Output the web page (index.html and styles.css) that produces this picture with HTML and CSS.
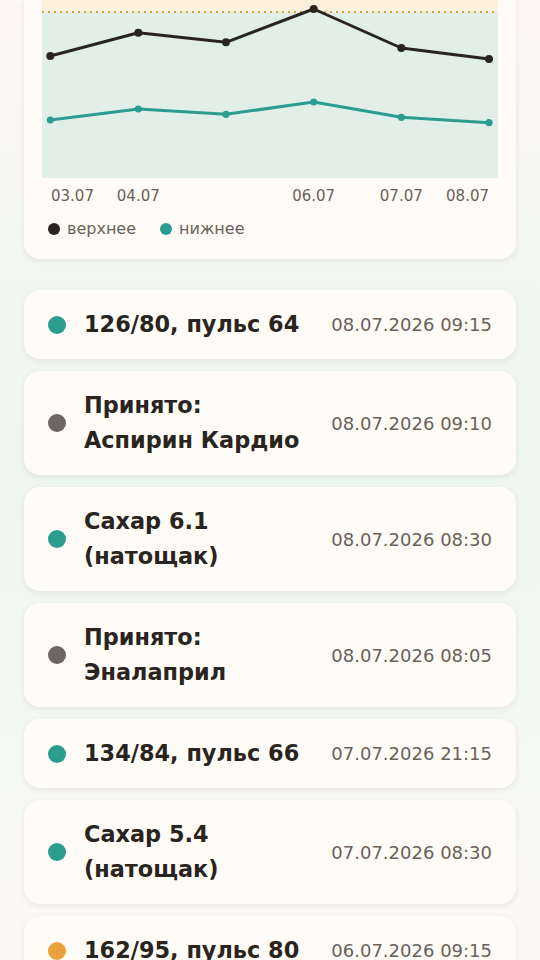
FILE: index.html
```html
<!DOCTYPE html>
<html lang="ru">
<head>
  <meta charset="UTF-8">
  <meta name="viewport" content="width=device-width, initial-scale=1.0">
  <title>Дневник здоровья</title>
  <link rel="stylesheet" href="styles.css">
</head>
<body>
  <div class="page">

    <!-- Pressure chart (scrolled past its header) -->
    <section class="chart-card">
      <svg class="chart" width="456" height="206" viewBox="0 0 456 206">
        <rect x="0" y="0" width="456" height="12" fill="#fcefdc"/>
        <rect x="0" y="12" width="456" height="166" fill="#e2efe8"/>
        <line x1="0" y1="12" x2="456" y2="12" stroke="#d9a040" stroke-width="2" stroke-dasharray="2 4"/>

        <polyline points="8.3,56 96.3,32.7 184,42.3 271.7,9 359.3,48 447,59"
                  fill="none" stroke="#2a2420" stroke-width="3" stroke-linejoin="round"/>
        <g fill="#2a2420">
          <circle cx="8.3" cy="56" r="4"/>
          <circle cx="96.3" cy="32.7" r="4"/>
          <circle cx="184" cy="42.3" r="4"/>
          <circle cx="271.7" cy="9" r="4"/>
          <circle cx="359.3" cy="48" r="4"/>
          <circle cx="447" cy="59" r="4"/>
        </g>

        <polyline points="8.3,120 96.3,109 184,114.3 271.7,102 359.3,117.3 447,122.7"
                  fill="none" stroke="#2a9d8f" stroke-width="3" stroke-linejoin="round"/>
        <g fill="#2a9d8f">
          <circle cx="8.3" cy="120" r="3.6"/>
          <circle cx="96.3" cy="109" r="3.6"/>
          <circle cx="184" cy="114.3" r="3.6"/>
          <circle cx="271.7" cy="102" r="3.6"/>
          <circle cx="359.3" cy="117.3" r="3.6"/>
          <circle cx="447" cy="122.7" r="3.6"/>
        </g>

        <g class="axis-label">
          <text x="9" y="201" text-anchor="start">03.07</text>
          <text x="96.3" y="201" text-anchor="middle">04.07</text>
          <text x="271.7" y="201" text-anchor="middle">06.07</text>
          <text x="359.3" y="201" text-anchor="middle">07.07</text>
          <text x="447" y="201" text-anchor="end">08.07</text>
        </g>
      </svg>

      <div class="legend">
        <span class="legend-item"><span class="legend-dot upper"></span>верхнее</span>
        <span class="legend-item"><span class="legend-dot lower"></span>нижнее</span>
      </div>
    </section>

    <!-- History entries -->
    <ul class="history">
      <li class="entry">
        <span class="entry-dot ok"></span>
        <span class="entry-title">126/80, пульс 64</span>
        <span class="entry-date">08.07.2026 09:15</span>
      </li>
      <li class="entry">
        <span class="entry-dot med"></span>
        <span class="entry-title">Принято: Аспирин Кардио</span>
        <span class="entry-date">08.07.2026 09:10</span>
      </li>
      <li class="entry">
        <span class="entry-dot ok"></span>
        <span class="entry-title">Сахар 6.1 (натощак)</span>
        <span class="entry-date">08.07.2026 08:30</span>
      </li>
      <li class="entry">
        <span class="entry-dot med"></span>
        <span class="entry-title">Принято: Эналаприл</span>
        <span class="entry-date">08.07.2026 08:05</span>
      </li>
      <li class="entry">
        <span class="entry-dot ok"></span>
        <span class="entry-title">134/84, пульс 66</span>
        <span class="entry-date">07.07.2026 21:15</span>
      </li>
      <li class="entry">
        <span class="entry-dot ok"></span>
        <span class="entry-title">Сахар 5.4 (натощак)</span>
        <span class="entry-date">07.07.2026 08:30</span>
      </li>
      <li class="entry">
        <span class="entry-dot warn"></span>
        <span class="entry-title">162/95, пульс 80</span>
        <span class="entry-date">06.07.2026 09:15</span>
      </li>
    </ul>

  </div>
</body>
</html>
```

FILE: styles.css
```css
body {
  margin: 0;
  padding: 0;
  font-family: "DejaVu Sans", "Noto Sans", sans-serif;
  color: #2a2420;
  min-height: 100vh;
  background: linear-gradient(180deg, #fdf7f1 0%, #f3f6f1 25%, #eef6f2 48%, #f2f7f3 70%, #fdf9f4 100%);
}
.page {
  padding: 0 24px;
}
.chart-card {
  background: #fffcf7;
  border-radius: 0 0 16px 16px;
  padding: 0 18px 20px;
  box-shadow: 0 2px 6px rgba(60, 40, 20, 0.08);
}
.chart {
  display: block;
}
.axis-label {
  font-family: "DejaVu Sans", sans-serif;
  font-size: 15px;
  fill: #6b605a;
}
.legend {
  display: flex;
  align-items: center;
  gap: 24px;
  margin-top: 13px;
  padding-left: 6px;
  font-size: 16px;
  line-height: 20px;
  color: #6b605a;
}
.legend-item {
  display: flex;
  align-items: center;
  gap: 7px;
}
.legend-dot {
  width: 12px;
  height: 12px;
  border-radius: 50%;
}
.legend-dot.upper {
  background: #2a2420;
}
.legend-dot.lower {
  background: #2a9d8f;
}
.history {
  list-style: none;
  margin: 31px 0 0;
  padding: 0;
  display: flex;
  flex-direction: column;
  gap: 12px;
}
.entry {
  display: flex;
  align-items: center;
  padding: 17px 24px;
  background: #fffcf7;
  border-radius: 16px;
  box-shadow: 0 2px 6px rgba(60, 40, 20, 0.08);
}
.entry-dot {
  flex: none;
  width: 18px;
  height: 18px;
  border-radius: 50%;
  margin-right: 18px;
}
.entry-dot.ok {
  background: #2a9d8f;
}
.entry-dot.med {
  background: #6f6460;
}
.entry-dot.warn {
  background: #e9a23b;
}
.entry-title {
  flex: 1;
  font-size: 22.4px;
  line-height: 35px;
  font-weight: bold;
}
.entry-date {
  flex: none;
  margin-left: 24px;
  font-size: 18px;
  color: #6b605a;
  white-space: nowrap;
}
```
